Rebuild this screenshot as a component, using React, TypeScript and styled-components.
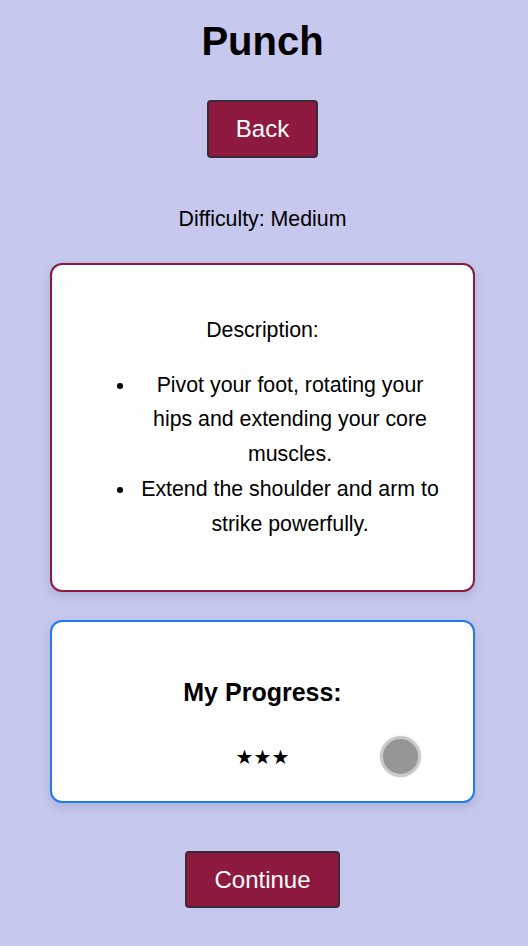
import { FunctionComponent } from 'react'
import styled, { createGlobalStyle } from 'styled-components'

const GlobalStyle = createGlobalStyle`
  html, body {
    margin: 0;
    padding: 0;
    background: #c6c8ee;
  }
  body {
    font-family: 'Liberation Sans', Arial, sans-serif;
    color: #000;
    line-height: 1.63;
  }
`

const Page = styled.div`
  min-height: 946px;
  display: flex;
  flex-direction: column;
  align-items: center;
  padding: 18px 53px 0 50px;
  box-sizing: border-box;
`

const Title = styled.h1`
  margin: 0;
  font-size: 40px;
  font-weight: bold;
  line-height: 46px;
`

const Button = styled.button<{ $top: number }>`
  margin-top: ${(props) => props.$top}px;
  height: ${(props) => (props.$top > 40 ? 57 : 58)}px;
  padding: 0 27px;
  background: #8e1a40;
  color: #fff;
  font-family: 'Liberation Sans', Arial, sans-serif;
  font-size: 24px;
  line-height: 1;
  border: 2px solid #3b2a36;
  border-radius: 4px;
  cursor: pointer;
`

const Difficulty = styled.div`
  margin-top: 44px;
  font-size: 21.33px;
  line-height: 34.8px;
`

const Card = styled.div<{ $border: string; $top: number }>`
  width: 100%;
  box-sizing: border-box;
  margin-top: ${(props) => props.$top}px;
  background: #fff;
  border: 2px solid ${(props) => props.$border};
  border-radius: 12px;
  box-shadow: 0 4px 10px rgba(60, 60, 110, 0.18);
`

const DescriptionCard = styled(Card)`
  padding: 28px 20px;
  font-size: 21.33px;
  line-height: 34.8px;
`

const DescriptionLabel = styled.p`
  margin: 20px 0;
  text-align: center;
`

const StepList = styled.ul`
  margin: 20px 0;
  padding: 0 9px 0 64px;
  text-align: center;
`

const ProgressCard = styled(Card)`
  padding: 28px 20px 24px;
`

const ProgressTitle = styled.h2`
  margin: 21px 0 22px;
  text-align: center;
  font-size: 25px;
  line-height: 43.5px;
  font-weight: bold;
`

const ProgressRow = styled.div`
  display: grid;
  grid-template-columns: 1fr auto 1fr;
  align-items: center;
  height: 41px;
`

const Stars = styled.span`
  grid-column: 2;
  font-family: 'DejaVu Sans', sans-serif;
  font-size: 20px;
  line-height: 1;
`

const Knob = styled.span`
  grid-column: 3;
  justify-self: end;
  margin-right: 32px;
  width: 35px;
  height: 35px;
  border-radius: 50%;
  background: #969696;
  border: 3px solid #c9c9c9;
  box-shadow: 0 0 2px rgba(0, 0, 0, 0.15);
`

const steps = [
  'Pivot your foot, rotating your hips and extending your core muscles.',
  'Extend the shoulder and arm to strike powerfully.',
]

const App: FunctionComponent = () => {
  return (
    <>
      <GlobalStyle />
      <Page>
        <Title>Punch</Title>
        <Button $top={36}>Back</Button>
        <Difficulty>Difficulty: Medium</Difficulty>
        <DescriptionCard $border="#8e1a40" $top={26}>
          <DescriptionLabel>Description:</DescriptionLabel>
          <StepList>
            {steps.map((step) => (
              <li key={step}>{step}</li>
            ))}
          </StepList>
        </DescriptionCard>
        <ProgressCard $border="#1f7be8" $top={28}>
          <ProgressTitle>My Progress:</ProgressTitle>
          <ProgressRow>
            <Stars>★★★</Stars>
            <Knob />
          </ProgressRow>
        </ProgressCard>
        <Button $top={48}>Continue</Button>
      </Page>
    </>
  )
}

export default App
